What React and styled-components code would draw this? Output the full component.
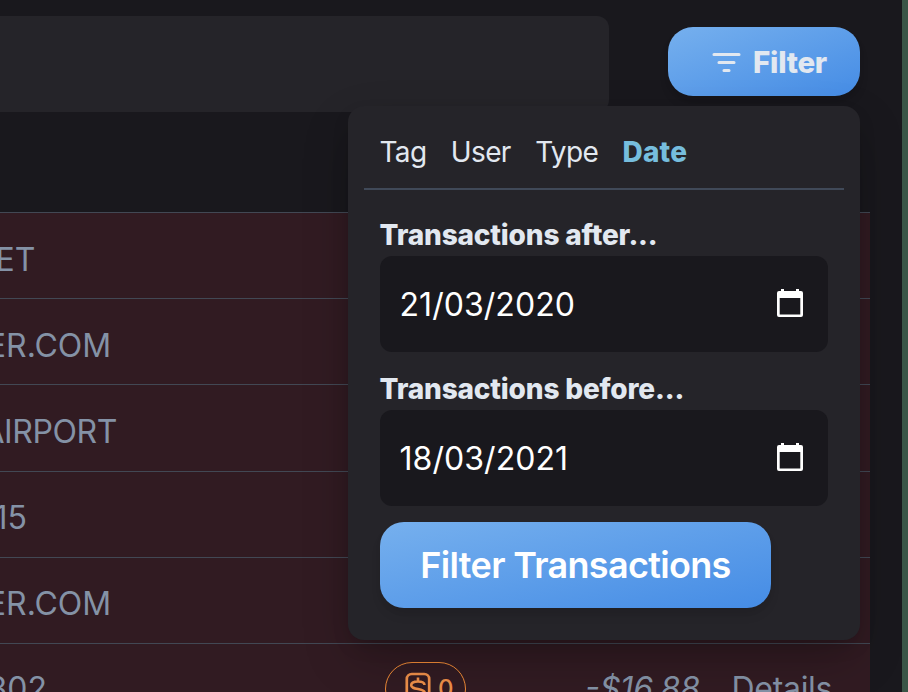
import React from "react";
import styled, { createGlobalStyle } from "styled-components";

const Global = createGlobalStyle`
  *, *::before, *::after { box-sizing: border-box; }
  body { margin: 0; background: #19181d; overflow: hidden; }
  button { font: inherit; border: 0; padding: 0; cursor: pointer; }
`;

const Page = styled.main`
  position: relative;
  display: flex;
  flex-direction: column;
  width: 908px;
  height: 692px;
  overflow: hidden;
  background: #19181d;
  border-right: 6px solid #3a5547;
  font-family: Inter, sans-serif;
  color: #e2e8f0;
`;

const Toolbar = styled.header`
  display: flex;
  justify-content: space-between;
  align-items: flex-start;
  height: 212px;
  flex: none;
  padding: 16px 42.5px 0 0;
`;

const SearchField = styled.div`
  width: 609px;
  height: 96px;
  border-radius: 0 12px 12px 0;
  background: #252429;
`;

const Button = styled.button`
  display: flex;
  align-items: center;
  background: linear-gradient(to bottom right, #76b0ee, #458ce5);
  border-radius: 24px;
  box-shadow: 0 8px 12px -2px rgba(0, 0, 0, 0.1), 0 4px 8px -2px rgba(0, 0, 0, 0.06);
`;

const FilterToggle = styled(Button)`
  gap: 12px;
  width: 192px;
  height: 69px;
  margin-top: 11px;
  padding: 1px 0 0 44.5px;
  border-radius: 25px;
  color: #e2e8f0;
  font-size: 29.5px;
  font-weight: 760;
  letter-spacing: -0.25px;
`;

const FilterGlyph = styled.svg`
  display: block;
  width: 29px;
  height: 21px;
`;

const Table = styled.section`
  width: 870px;
`;

const Row = styled.div`
  display: flex;
  height: 86.2px;
  border-top: 1px solid #424854;
  background: #311b22;
  color: #8492a6;
  font-size: 32px;
  font-weight: 370;
  line-height: 39px;
  padding-top: ${(p) => (p.$last ? 25 : 26.6)}px;
`;

const Merchant = styled.div`
  display: flex;
  justify-content: flex-end;
  flex: none;
  width: ${(p) => p.$end}px;
  height: 40px;
  white-space: nowrap;
  letter-spacing: ${(p) => p.$tracking || 0}px;
`;

const TagPill = styled.div`
  display: flex;
  align-items: center;
  gap: 7px;
  flex: none;
  width: 81px;
  height: 54px;
  margin: -7px 0 0 338px;
  padding-left: 18px;
  border: 1px solid #ed8936;
  border-radius: 27px;
  color: #ed8f49;
  font-size: 24px;
  font-weight: 450;
`;

const Amount = styled.em`
  margin-left: 119px;
  width: 117px;
  white-space: nowrap;
`;

const Details = styled.span`
  margin-left: 29.5px;
  letter-spacing: -0.3px;
`;

const Panel = styled.aside`
  position: absolute;
  left: 348px;
  top: 106px;
  width: 512px;
  height: 534px;
  padding: 16px;
  border-radius: 16px;
  background: #252429;
  box-shadow: 0 20px 50px -6px rgba(0, 0, 0, 0.25), 0 8px 20px -4px rgba(0, 0, 0, 0.15);
`;

const Tabs = styled.nav`
  display: flex;
  gap: 24.4px;
  height: 68px;
  padding: 12px 16px 0 15.5px;
  border-bottom: 2px solid #404958;
`;

const Tab = styled.span`
  font-size: 28px;
  line-height: 36px;
  letter-spacing: ${(p) => (p.$active ? "0.2px" : "-0.65px")};
  font-weight: ${(p) => (p.$active ? 850 : 370)};
  color: ${(p) => (p.$active ? "#76bddd" : "#e2e8f0")};
`;

const Form = styled.div`
  display: flex;
  flex-direction: column;
  align-items: flex-start;
  padding: 24px 16px 0;
`;

const Field = styled.label`
  display: flex;
  flex-direction: column;
  width: 448px;
  height: 154px;
`;

const FieldLabel = styled.span`
  height: 42px;
  margin-left: -0.5px;
  font-size: 28px;
  line-height: 43px;
  font-weight: 780;
  letter-spacing: -0.17px;
  white-space: nowrap;
`;

const DateBox = styled.span`
  display: flex;
  align-items: center;
  justify-content: space-between;
  height: 96px;
  padding: 0 25px 0 19.5px;
  border-radius: 12px;
  background: #19181d;
  color: #fff;
  font-size: 32px;
  font-weight: 380;
  letter-spacing: 0.05px;
`;

const CalendarGlyph = styled.svg`
  display: block;
  width: 26px;
  height: 28px;
  margin-bottom: 2px;
`;

const Submit = styled(Button)`
  justify-content: center;
  width: 391px;
  height: 86px;
  color: #fff;
  font-size: 36px;
  font-weight: 600;
  letter-spacing: -0.68px;
`;

const merchants = [
  { text: "ET", end: 35.5 },
  { text: "ER.COM", end: 111.2 },
  { text: "AIRPORT", end: 117, tracking: -0.4 },
  { text: "15", end: 27 },
  { text: "ER.COM", end: 111.2 },
];

const dates = [
  { label: "Transactions after...", value: "21/03/2020" },
  { label: "Transactions before...", value: "18/03/2021" },
];

export default function App() {
  return (
    <Page>
      <Global />
      <Toolbar>
        <SearchField />
        <FilterToggle>
          <FilterGlyph viewBox="0 0 29 21" fill="none" stroke="#e2e8f0" strokeWidth="3.1" strokeLinecap="round">
            <path d="M2 2.5H27M7 10.5H22M12 18.5H17" />
          </FilterGlyph>
          Filter
        </FilterToggle>
      </Toolbar>
      <Table>
        {merchants.map((m, i) => (
          <Row key={i}>
            <Merchant $end={m.end} $tracking={m.tracking}>{m.text}</Merchant>
          </Row>
        ))}
        <Row $last>
          <Merchant $end={47}>802</Merchant>
          <TagPill>
            <svg width="27" height="34" viewBox="0 0 27 34" fill="none" stroke="currentColor" strokeWidth="2.7">
              <rect x="2.8" y="2" width="22.4" height="30" rx="5" />
              <path d="M20.500 13C20.500 10.500 18 9.500 14 9.500S7.200 10.800 7.200 13.300s2.600 3 6.800 3.700 6.800 1.500 6.800 4-2.800 3.800-6.800 3.800-6.800-1.300-6.800-3.800M14 5.500v4M14 24.800v4" strokeWidth="2.6" />
            </svg>
            0
          </TagPill>
          <Amount>-$16.88</Amount>
          <Details>Details</Details>
        </Row>
      </Table>
      <Panel>
        <Tabs>
          <Tab>Tag</Tab>
          <Tab>User</Tab>
          <Tab>Type</Tab>
          <Tab $active>Date</Tab>
        </Tabs>
        <Form>
          {dates.map((d) => (
            <Field key={d.label}>
              <FieldLabel>{d.label}</FieldLabel>
              <DateBox>
                {d.value}
                <CalendarGlyph viewBox="0 0 26 28">
                  <path d="M2 2H24Q26 2 26 4V26Q26 28 24 28H2Q0 28 0 26V4Q0 2 2 2ZM2.700 9V25.500H23.300V9Z" fill="#fff" fillRule="evenodd" />
                  <path d="M4 0H7V3H4ZM19 0H22V3H19Z" fill="#fff" />
                </CalendarGlyph>
              </DateBox>
            </Field>
          ))}
          <Submit>Filter Transactions</Submit>
        </Form>
      </Panel>
    </Page>
  );
}
